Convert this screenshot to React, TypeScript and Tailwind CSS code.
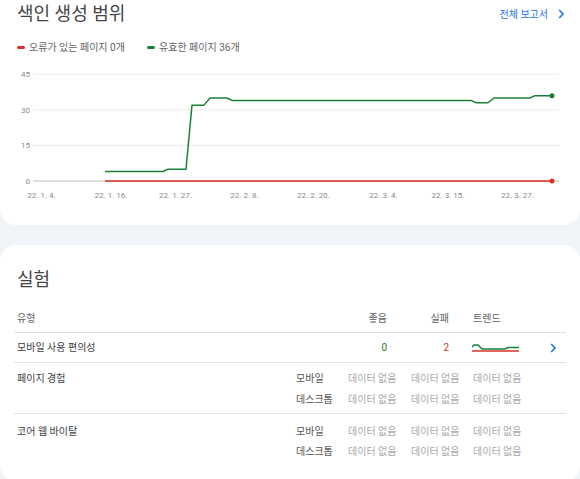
const FONT = "font-['Roboto','Noto_Sans_CJK_KR',sans-serif]";

const y = (v: number) => 121 - v * 2.371;

const green: [number, number][] = [
  [105, 4], [163, 4], [168, 5], [186, 5], [192, 32], [204, 32], [210, 35], [227, 35],
  [232, 34], [471, 34], [476, 33], [488, 33], [494, 35], [530, 35], [535, 36], [552, 36],
];

const xLabels: [number, string][] = [
  [41.5, "22. 1. 4."], [111, "22. 1. 16."], [175.5, "22. 1. 27."], [244.5, "22. 2. 8."],
  [313.5, "22. 2. 20."], [383.5, "22. 3. 4."], [448, "22. 3. 15."], [517.5, "22. 3. 27."],
];

const CoverageChart = () => (
  <svg width="580" height="150" viewBox="0 0 580 150" className="mt-[4px] block">
    {[15, 30, 45].map((v) => (
      <line key={v} x1="33" x2="559" y1={y(v)} y2={y(v)} stroke="#ebebeb" strokeWidth="1" />
    ))}
    <line x1="33" x2="559" y1={y(0)} y2={y(0)} stroke="#bdbdbd" strokeWidth="1" />
    {[0, 15, 30, 45].map((v) => (
      <text key={v} x="30" y={y(v) + 3} textAnchor="end" fontSize="8" fill="#8a8a8a" fontFamily="Roboto, sans-serif">
        {v}
      </text>
    ))}
    {xLabels.map(([x, t]) => (
      <text key={t} x={x} y="138" textAnchor="middle" fontSize="8" fill="#8a8a8a" fontFamily="Roboto, sans-serif">
        {t}
      </text>
    ))}
    <line x1="105" x2="552" y1={y(0)} y2={y(0)} stroke="#d93025" strokeWidth="1.5" />
    <polyline
      points={green.map(([x, v]) => `${x},${y(v)}`).join(" ")}
      fill="none"
      stroke="#188038"
      strokeWidth="1.5"
      strokeLinejoin="round"
    />
    <circle cx="552" cy={y(36)} r="2.5" fill="#188038" />
    <circle cx="552" cy={y(0)} r="2.5" fill="#d93025" />
  </svg>
);

const Chevron = ({ className }: { className?: string }) => (
  <svg width="7" height="10" viewBox="0 0 7 10" className={className}>
    <path d="M1.2 1 L5 5 L1.2 9" fill="none" stroke="#1a73e8" strokeWidth="1.6" />
  </svg>
);

const Sparkline = () => (
  <svg width="48" height="10" viewBox="0 0 48 10" className="block">
    <line x1="0" x2="47" y1="8" y2="8" stroke="#d93025" strokeWidth="1.5" />
    <polyline
      points="0,4 2,2 6,2 10,6 33,6 36,4.5 47,4.5"
      fill="none"
      stroke="#188038"
      strokeWidth="1.5"
    />
  </svg>
);

const NoData = () => (
  <>
    <span className="w-[63px]">데이터 없음</span>
    <span className="w-[62px]">데이터 없음</span>
    <span className="w-[62px]">데이터 없음</span>
  </>
);

const DeviceRows = ({ h }: { h: string }) => (
  <div className="flex flex-col">
    {["모바일", "데스크톱"].map((d) => (
      <div key={d} className={`flex items-center ${h} text-[10px] text-[#a8a8a8]`}>
        <span className="w-[52px] text-[#555]">{d}</span>
        <NoData />
      </div>
    ))}
  </div>
);

export default function App() {
  return (
    <div className={`w-[580px] h-[479px] overflow-hidden bg-[#f0f4f9] ${FONT}`}>
      {/* 색인 생성 범위 */}
      <div className="h-[225px] bg-white rounded-b-[16px]">
        <div className="flex h-[28px] items-center justify-between pl-[17px] pr-[15px]">
          <h1 className="text-[18px] leading-[24px] text-[#444]">색인 생성 범위</h1>
          <a className="flex items-center gap-[10px] text-[10px] text-[#1a73e8]">
            전체 보고서
            <Chevron />
          </a>
        </div>
        <div className="mt-[10px] flex h-[18px] items-center pl-[17px] text-[10px] text-[#5f6368]">
          <span className="mr-[4px] h-[3px] w-[8px] rounded-full bg-[#d93025]" />
          <span className="w-[118px]">오류가 있는 페이지 0개</span>
          <span className="mr-[4px] h-[3px] w-[8px] rounded-full bg-[#188038]" />
          <span>유효한 페이지 36개</span>
        </div>
        <CoverageChart />
      </div>

      {/* 실험 */}
      <div className="mt-[20px] h-[236px] bg-white rounded-[16px] px-[14px] pt-[23px]">
        <h2 className="pl-[3px] text-[18px] leading-[24px] text-[#444]">실험</h2>
        <div className="mt-[13px] flex h-[28px] items-center border-b border-[#e0e0e0] text-[10px] text-[#5f6368]">
          <span className="w-[311px] pl-[3px]">유형</span>
          <span className="w-[62px] text-right">좋음</span>
          <span className="w-[62px] text-right">실패</span>
          <span className="pl-[24px]">트렌드</span>
        </div>
        <div className="flex h-[30px] items-center border-b border-[#e0e0e0] text-[10px] text-[#3c4043]">
          <span className="w-[311px] pl-[3px]">모바일 사용 편의성</span>
          <span className="w-[62px] text-right text-[#188038]">0</span>
          <span className="w-[62px] text-right text-[#d93025]">2</span>
          <span className="w-[77px] pl-[23px]">
            <Sparkline />
          </span>
          <span className="pl-[24px]">
            <Chevron className="block" />
          </span>
        </div>
        <div className="flex border-b border-[#e0e0e0] pt-[5px] pb-[3px]">
          <span className="flex h-[21px] w-[282px] items-center pl-[3px] text-[10px] text-[#3c4043]">페이지 경험</span>
          <DeviceRows h="h-[21px]" />
        </div>
        <div className="flex pt-[7px]">
          <span className="flex h-[20px] w-[282px] items-center pl-[3px] text-[10px] text-[#3c4043]">코어 웹 바이탈</span>
          <DeviceRows h="h-[20px]" />
        </div>
      </div>
    </div>
  );
}
